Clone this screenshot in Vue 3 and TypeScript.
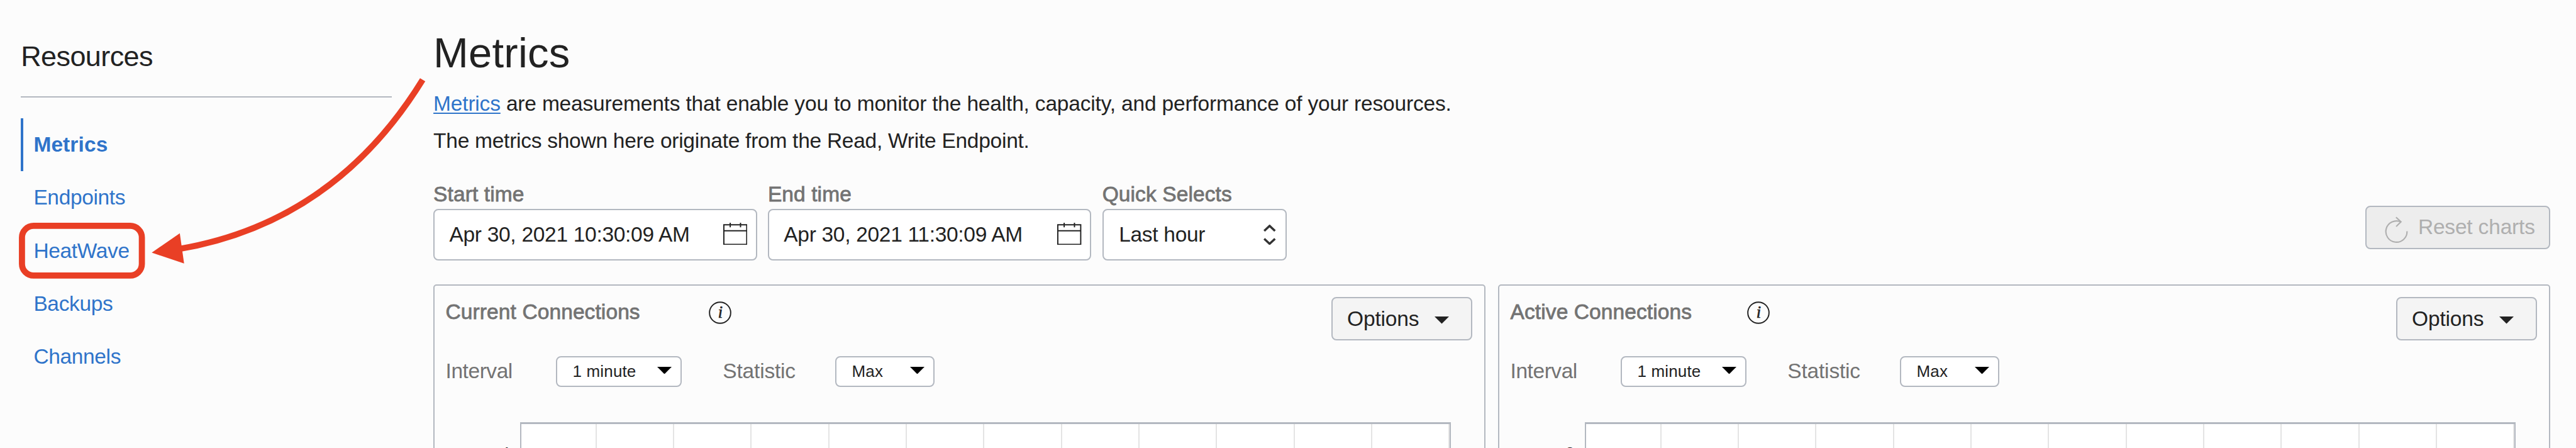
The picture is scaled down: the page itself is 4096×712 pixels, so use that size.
<script setup lang="ts">
interface NavItem {
  label: string
  active?: boolean
}

interface Panel {
  title: string
  tick: string
  size: 'long' | 'short'
}

const navItems: NavItem[] = [
  { label: 'Metrics', active: true },
  { label: 'Endpoints' },
  { label: 'HeatWave' },
  { label: 'Backups' },
  { label: 'Channels' },
]

const dateFields = [
  { label: 'Start time', value: 'Apr 30, 2021 10:30:09 AM' },
  { label: 'End time', value: 'Apr 30, 2021 11:30:09 AM' },
]

const panels: Panel[] = [
  { title: 'Current Connections', tick: '4', size: 'long' },
  { title: 'Active Connections', tick: '2', size: 'short' },
]

const columns = 12
</script>

<template>
  <div class="page">
    <aside class="sidebar">
      <h2 class="sidebar-title">Resources</h2>
      <nav class="nav">
        <a v-for="item in navItems" :key="item.label" class="nav-item" :class="{ active: item.active }">{{ item.label }}</a>
      </nav>
    </aside>

    <main class="main">
      <h1 class="title">Metrics</h1>
      <p class="text"><a class="link">Metrics</a> are measurements that enable you to monitor the health, capacity, and performance of your resources.</p>
      <p class="text source">The metrics shown here originate from the Read, Write Endpoint.</p>

      <div class="toolbar">
        <div v-for="field in dateFields" :key="field.label" class="field">
          <label class="field-label">{{ field.label }}</label>
          <div class="input date">
            <span>{{ field.value }}</span>
            <svg class="calendar" viewBox="0 0 39.4 36.3" fill="none" stroke="#222" stroke-width="2">
              <path d="M1 3.4H38.4V35.3H1ZM1 13H38.4M11.4 0V7.4M28.2 0V7.4" />
            </svg>
          </div>
        </div>
        <div class="field">
          <label class="field-label">Quick Selects</label>
          <div class="input quick">
            <span>Last hour</span>
            <svg class="chevrons" viewBox="0 0 20 33" fill="none" stroke="#333" stroke-width="3.6">
              <path d="M1.2 10.2L10 2L18.8 10.2M1.2 23L10 31.2L18.8 23" />
            </svg>
          </div>
        </div>
        <button class="reset">
          <svg class="reset-icon" viewBox="0 0 38 43" fill="none" stroke="#afafaf" stroke-width="2.2">
            <path d="M36.3 24A17.3 17.3 0 1 1 26 8.8" />
            <path d="M18.3 1.3L26.4 8.8L18.5 16.4" />
          </svg>
          <span>Reset charts</span>
        </button>
      </div>

      <div class="panels">
        <section v-for="panel in panels" :key="panel.title" class="panel">
          <header class="panel-header">
            <h3 class="panel-title" :class="panel.size">{{ panel.title }}</h3>
            <svg class="info" viewBox="0 0 37 37">
              <circle cx="18.5" cy="18.5" r="17.3" fill="none" stroke="#222" stroke-width="2" />
              <text x="18.8" y="26.8" text-anchor="middle" class="info-letter">i</text>
            </svg>
            <button class="options">
              <span>Options</span>
              <svg class="caret" viewBox="0 0 24 12"><path d="M0 0H24L12 12Z" fill="#222" /></svg>
            </button>
          </header>

          <div class="controls">
            <label class="interval-label">Interval</label>
            <div class="select minute">
              <span>1 minute</span>
              <svg class="caret" viewBox="0 0 24 12"><path d="M0 0H24L12 12Z" /></svg>
            </div>
            <label class="statistic-label">Statistic</label>
            <div class="select max">
              <span>Max</span>
              <svg class="caret" viewBox="0 0 24 12"><path d="M0 0H24L12 12Z" /></svg>
            </div>
          </div>

          <div class="chart-row">
            <span class="tick">{{ panel.tick }}</span>
            <div class="chart">
              <div v-for="n in columns" :key="n" class="column"></div>
            </div>
          </div>
        </section>
      </div>
    </main>

    <!-- Annotation pointing at the HeatWave entry -->
    <svg class="annotation" viewBox="0 0 4198 730" preserveAspectRatio="none">
      <rect x="35.8" y="368" width="195.4" height="81" rx="19" fill="none" stroke="#e93f25" stroke-width="10" />
      <path d="M688.8 130Q545 363 290 406" fill="none" stroke="#e93f25" stroke-width="10" />
      <path d="M247.3 411.7L293 380L300 429.3Z" fill="#e93f25" />
    </svg>
  </div>
</template>

<style>
html,
body {
  background: #fcfcfc;
  overflow: hidden;
}
</style>

<style scoped>
* {
  box-sizing: border-box;
}

.page {
  position: relative;
  display: flex;
  width: 4096px;
  height: 712px;
  overflow: hidden;
  background: #fcfcfc;
  color: #222;
  font-family: "Liberation Sans", Arial, sans-serif;
  font-size: 33.5px;
  letter-spacing: -0.18px;
}

h1,
h2,
h3,
p {
  margin: 0;
  font-weight: 400;
}

button {
  font: inherit;
  letter-spacing: inherit;
  color: inherit;
}

svg {
  display: block;
  flex: none;
}

.sidebar {
  flex: none;
  width: 590px;
  margin-left: 33.2px;
  padding-top: 59.5px;
}

.sidebar-title {
  height: 95.7px;
  border-bottom: 2px solid #b3b8c0;
  font-size: 45px;
  line-height: 60px;
  letter-spacing: -0.6px;
}

.nav {
  display: flex;
  flex-direction: column;
  margin-top: 33.1px;
}

.nav-item {
  height: 84.15px;
  padding-left: 20.2px;
  line-height: 84.15px;
  letter-spacing: -0.35px;
  color: #2f74ca;
}

.nav-item.active {
  padding-left: 16.2px;
  border-left: 4px solid #2f74ca;
  font-weight: 700;
  letter-spacing: 0.1px;
}

.main {
  flex: none;
  width: 3365.6px;
  margin-left: 65.9px;
  padding-top: 43.8px;
}

.title {
  margin-bottom: 12.5px;
  font-size: 67px;
  line-height: 80px;
  letter-spacing: 0.2px;
}

.text {
  line-height: 58.7px;
  white-space: nowrap;
}

.text.source {
  letter-spacing: -0.26px;
}

.link {
  color: #2f74ca;
  text-decoration: underline;
  text-decoration-thickness: 2px;
  text-underline-offset: 3px;
  text-decoration-skip-ink: none;
}

.toolbar {
  display: flex;
  gap: 17.3px;
  margin-top: 35.7px;
}

.field-label {
  display: block;
  margin-bottom: 2.3px;
  line-height: 40px;
  letter-spacing: 0.1px;
  color: #737373;
  -webkit-text-stroke: 0.8px #737373;
}

.input {
  display: flex;
  align-items: center;
  justify-content: space-between;
  height: 82px;
  border: 2px solid #b3b8c0;
  border-radius: 8px;
  background: #fff;
  letter-spacing: -0.3px;
  white-space: nowrap;
}

.date {
  width: 514.5px;
  padding: 0 13.6px 0 23.4px;
}

.quick {
  width: 293.5px;
  padding: 0 15.3px 0 24.5px;
}

.calendar {
  width: 38.4px;
  height: 35.4px;
  margin-top: -2px;
}

.chevrons {
  width: 19.5px;
  height: 32.2px;
}

.reset {
  display: flex;
  align-items: center;
  gap: 15.6px;
  width: 293.4px;
  height: 69px;
  margin: 37.5px 0 0 auto;
  padding: 0 0 0 29px;
  border: 2px solid #b3b8c0;
  border-radius: 8px;
  background: #ededed;
  color: #afafaf;
  white-space: nowrap;
}

.reset-icon {
  width: 37px;
  height: 42px;
  margin-top: 8px;
}

.panels {
  display: grid;
  grid-template-columns: 1fr 1fr;
  gap: 20.4px;
  margin-top: 38.3px;
}

.panel {
  height: 300px;
  padding: 18.5px 18.5px 0 17.5px;
  border: 2px solid #b3b8c0;
  border-radius: 5px;
}

.panel-header {
  display: flex;
  align-items: flex-start;
  height: 68.6px;
}

.panel-title {
  margin-top: 3.3px;
  font-size: 33.5px;
  line-height: 40px;
  letter-spacing: 0.1px;
  color: #737373;
  -webkit-text-stroke: 0.8px #737373;
  white-space: nowrap;
}

.panel-title.long {
  width: 418px;
}

.panel-title.short {
  width: 376.5px;
}

.info {
  width: 36px;
  height: 36px;
  margin-top: 6.4px;
}

.info-letter {
  font: italic 400 27px "Liberation Serif", "Times New Roman", serif;
  fill: #222;
  stroke: #222;
  stroke-width: 0.7px;
}

.options {
  display: flex;
  align-items: center;
  justify-content: space-between;
  width: 224.1px;
  height: 68.6px;
  margin-left: auto;
  padding: 0 35px 0 23px;
  border: 2px solid #b3b8c0;
  border-radius: 8px;
  background: #f4f4f4;
}

.caret {
  width: 23px;
  height: 11.6px;
}

.options .caret {
  margin-top: 4px;
}

.controls {
  display: flex;
  align-items: center;
  height: 48.8px;
  margin-top: 24.8px;
  color: #737373;
}

.interval-label {
  width: 175.4px;
  letter-spacing: -0.45px;
}

.statistic-label {
  width: 178.7px;
  margin-left: 65.3px;
}

.select {
  display: flex;
  align-items: center;
  justify-content: space-between;
  height: 48.8px;
  padding: 0 13.8px 0 24.6px;
  border: 2px solid #b3b8c0;
  border-radius: 8px;
  background: #fff;
  color: #222;
  font-size: 26px;
  letter-spacing: 0.15px;
}

.select .caret {
  margin-top: -3.4px;
}

.minute {
  width: 200px;
}

.max {
  width: 157.7px;
}

.chart-row {
  display: flex;
  margin-top: 56.6px;
}

.tick {
  width: 118.5px;
  padding: 33.8px 16.8px 0 0;
  font-size: 26px;
  line-height: 30px;
  text-align: right;
}

.chart {
  display: flex;
  width: 1480.4px;
  height: 120px;
  border: 2px solid #b3b8c0;
  border-top-width: 3px;
  background: #fff;
}

.column {
  flex: none;
  width: 123.33px;
  border-right: 2px solid #e4e4e4;
}

.column:first-child {
  width: 119.5px;
}

.annotation {
  position: absolute;
  inset: 0;
  width: 4096px;
  height: 712px;
  pointer-events: none;
}
</style>
